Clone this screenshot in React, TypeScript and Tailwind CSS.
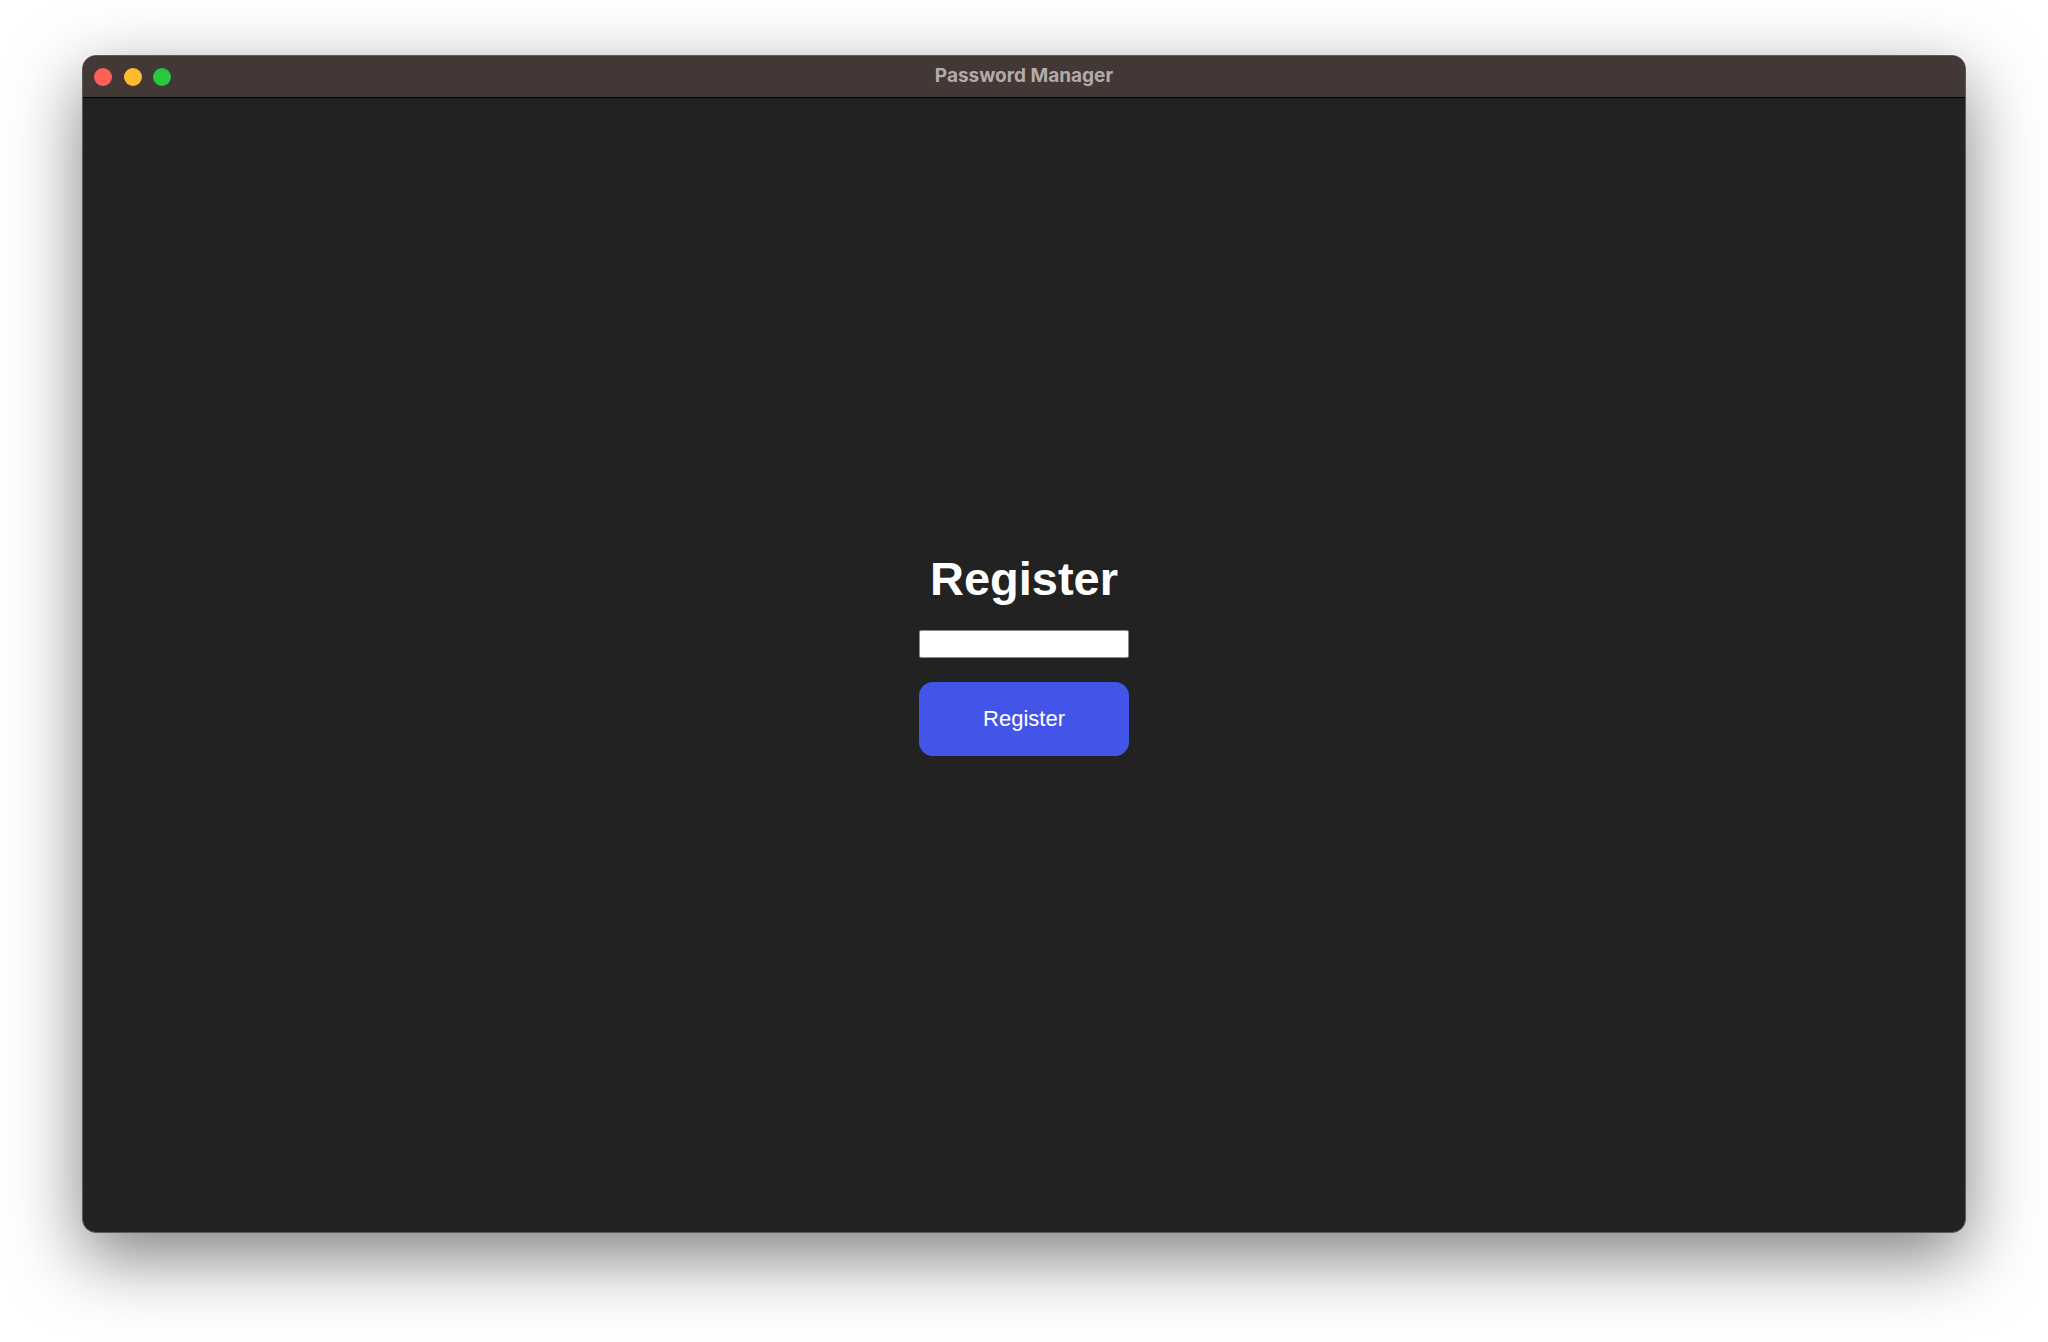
import React from 'react';

const TrafficLights: React.FC = () => (
  <div className="flex items-center gap-[11.5px] pl-[11px]">
    <span className="block w-[18px] h-[18px] rounded-full bg-[#fe5f57]" />
    <span className="block w-[18px] h-[18px] rounded-full bg-[#febc2e]" />
    <span className="block w-[18px] h-[18px] rounded-full bg-[#28c840]" />
  </div>
);

const App: React.FC = () => {
  return (
    <div className="w-[2048px] h-[1342px] bg-white pl-[82px] pt-[55px] font-['Liberation_Sans',Arial,sans-serif]">
      <div className="w-[1884px] h-[1178px] rounded-[14px] border border-[#5c5c5c] bg-[#222222] overflow-hidden flex flex-col shadow-[0_24px_70px_rgba(0,0,0,0.5)]">
        <div className="relative h-[42px] shrink-0 bg-[#433836] border-b border-black flex items-center">
          <TrafficLights />
          <div className="absolute inset-0 flex items-center justify-center">
            <span className="text-[19px] font-bold text-[#b3aba9] font-['Inter','Liberation_Sans',sans-serif]">Password Manager</span>
          </div>
        </div>
        <div className="flex-1 flex flex-col items-center justify-center pb-[22px]">
          <h1 className="text-[47px] leading-[52px] font-bold text-white">Register</h1>
          <input
            type="password"
            className="mt-[25px] w-[210px] h-[28px] bg-white border border-[#8a8a8a] rounded-[2px] outline-none"
          />
          <button className="mt-[24px] w-[210px] h-[74px] rounded-[14px] bg-[#4355e8] text-white text-[22px]">
            Register
          </button>
        </div>
      </div>
    </div>
  );
};

export default App;
